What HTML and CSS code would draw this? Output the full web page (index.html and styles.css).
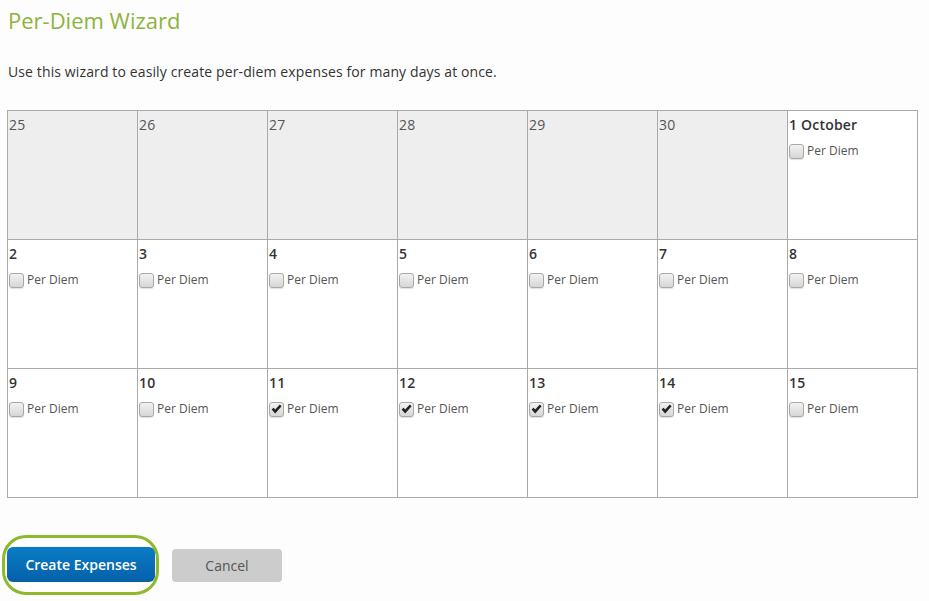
FILE: index.html
```
<!DOCTYPE html>
<html>
<head>
<meta charset="utf-8">
<link rel="stylesheet" href="styles.css">
</head>
<body>
<div class="page">
  <h1 class="title">Per-Diem Wizard</h1>
  <p class="intro">Use this wizard to easily create per-diem expenses for many days at once.</p>
  <div class="cal">
    <div class="cell out"><span class="day">25</span></div>
    <div class="cell out"><span class="day">26</span></div>
    <div class="cell out"><span class="day">27</span></div>
    <div class="cell out"><span class="day">28</span></div>
    <div class="cell out"><span class="day">29</span></div>
    <div class="cell out"><span class="day">30</span></div>
    <div class="cell"><span class="day">1 October</span><label class="pd"><span class="cb"></span>Per Diem</label></div>

    <div class="cell"><span class="day">2</span><label class="pd"><span class="cb"></span>Per Diem</label></div>
    <div class="cell"><span class="day">3</span><label class="pd"><span class="cb"></span>Per Diem</label></div>
    <div class="cell"><span class="day">4</span><label class="pd"><span class="cb"></span>Per Diem</label></div>
    <div class="cell"><span class="day">5</span><label class="pd"><span class="cb"></span>Per Diem</label></div>
    <div class="cell"><span class="day">6</span><label class="pd"><span class="cb"></span>Per Diem</label></div>
    <div class="cell"><span class="day">7</span><label class="pd"><span class="cb"></span>Per Diem</label></div>
    <div class="cell"><span class="day">8</span><label class="pd"><span class="cb"></span>Per Diem</label></div>

    <div class="cell"><span class="day">9</span><label class="pd"><span class="cb"></span>Per Diem</label></div>
    <div class="cell"><span class="day">10</span><label class="pd"><span class="cb"></span>Per Diem</label></div>
    <div class="cell"><span class="day">11</span><label class="pd"><span class="cb on"><svg viewBox="0 0 15 15" width="15" height="15"><path d="M2.6 7.6 L4.6 5.8 L6.2 7.6 L10.8 2.6 L12.6 4.2 L6.2 11.6 Z" fill="#222"/></svg></span>Per Diem</label></div>
    <div class="cell"><span class="day">12</span><label class="pd"><span class="cb on"><svg viewBox="0 0 15 15" width="15" height="15"><path d="M2.6 7.6 L4.6 5.8 L6.2 7.6 L10.8 2.6 L12.6 4.2 L6.2 11.6 Z" fill="#222"/></svg></span>Per Diem</label></div>
    <div class="cell"><span class="day">13</span><label class="pd"><span class="cb on"><svg viewBox="0 0 15 15" width="15" height="15"><path d="M2.6 7.6 L4.6 5.8 L6.2 7.6 L10.8 2.6 L12.6 4.2 L6.2 11.6 Z" fill="#222"/></svg></span>Per Diem</label></div>
    <div class="cell"><span class="day">14</span><label class="pd"><span class="cb on"><svg viewBox="0 0 15 15" width="15" height="15"><path d="M2.6 7.6 L4.6 5.8 L6.2 7.6 L10.8 2.6 L12.6 4.2 L6.2 11.6 Z" fill="#222"/></svg></span>Per Diem</label></div>
    <div class="cell"><span class="day">15</span><label class="pd"><span class="cb"></span>Per Diem</label></div>
  </div>
  <div class="actions">
    <span class="ring"><button class="btn primary">Create Expenses</button></span>
    <button class="btn cancel">Cancel</button>
  </div>
</div>
</body>
</html>
```

FILE: styles.css
```
html, body {
  margin: 0;
  padding: 0;
  background: #fdfdfd;
}
body {
  font-family: "Open Sans", "Liberation Sans", sans-serif;
  color: #333;
}
.page {
  padding: 0 11px 0 7px;
}
.title {
  margin: 0;
  padding-top: 5px;
  height: 30px;
  font-size: 22px;
  font-weight: 400;
  color: #8cb43c;
  line-height: 30px;
  padding-left: 1px;
}
.intro {
  margin: 27px 0 0 1px;
  font-size: 14px;
  letter-spacing: 0.12px;
  line-height: 20px;
  color: #333;
}
.cal {
  margin-top: 28px;
  display: grid;
  grid-template-columns: repeat(7, 130px);
  grid-auto-rows: 129px;
  border-left: 1px solid #aaa;
  border-top: 1px solid #aaa;
  width: 910px;
}
.cell {
  border-right: 1px solid #aaa;
  border-bottom: 1px solid #aaa;
  background: #fff;
  padding: 5px 0 0 1px;
  display: flex;
  flex-direction: column;
  align-items: flex-start;
}
.cell.out {
  background: #eee;
}
.day {
  font-size: 14px;
  letter-spacing: 0.2px;
  line-height: 18px;
  font-weight: 600;
  color: #333;
}
.cell.out .day {
  font-weight: 400;
  color: #555;
}
.pd {
  margin-top: 8px;
  display: flex;
  align-items: center;
  font-size: 12px;
  color: #555;
  line-height: 18px;
}
.cb {
  width: 15px;
  height: 15px;
  box-sizing: border-box;
  border: 1px solid #a8a8a8;
  border-radius: 3px;
  background: linear-gradient(#f2f2f2, #d6d6d6);
  box-shadow: 0 1px 1px rgba(0,0,0,0.12);
  margin-right: 3px;
  position: relative;
}
.cb svg {
  position: absolute;
  left: -1px;
  top: -1px;
}
.actions {
  margin-top: 37px;
  display: flex;
  align-items: center;
  margin-left: -5px;
}
.ring {
  display: inline-flex;
  border: 3px solid #8cba2a;
  border-radius: 24px;
  padding: 9px 1px 10px 2px;
  background: #fff;
}
.btn {
  font-family: "Open Sans", "Liberation Sans", sans-serif;
  font-size: 14px;
  border: none;
  height: 35px;
  border-radius: 6px;
}
.primary {
  width: 148px;
  background: linear-gradient(#0a7cc6, #0560a8);
  color: #fff;
  font-weight: 600;
}
.cancel {
  margin-left: 13px;
  width: 110px;
  height: 33px;
  background: #ccc;
  color: #555;
  border-radius: 4px;
}
```
